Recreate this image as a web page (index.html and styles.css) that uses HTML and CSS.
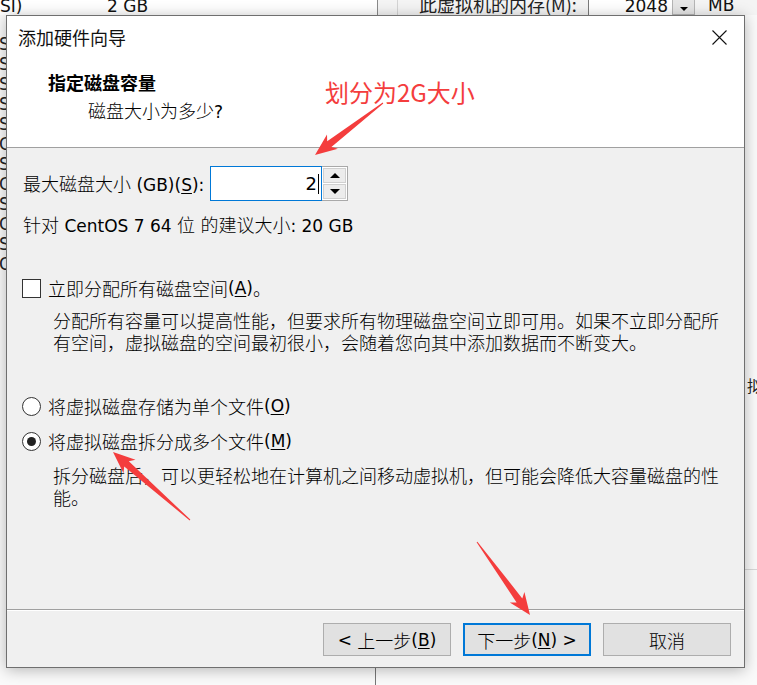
FILE: index.html
```html
<!DOCTYPE html>
<html lang="zh-CN">
<head>
<meta charset="utf-8">
<title>添加硬件向导</title>
<link rel="stylesheet" href="styles.css">
</head>
<body>
<div class="screen">
  <div class="backdrop">
    <div class="topstrip">
      <div class="ts-left"><span class="ts-a">SI)</span><span class="ts-b">2 GB</span></div>
      <div class="ts-right">
        <span class="ts-gap"></span>
        <span class="ts-label">此虚拟机的内存(M):</span>
        <span class="ts-input">2048</span>
        <span class="ts-spin"><i></i></span>
        <span class="ts-unit">MB</span>
      </div>
    </div>
    <div class="mid">
      <div class="mid-left">
        <span>S</span><span>S</span><span>S</span><span>S</span><span>S</span><span>C</span>
        <span>S</span><span>C</span><span>S</span><span>C</span><span>S</span><span>O</span>
      </div>
      <div class="mid-right">
        <span class="mr-text">拟</span>
        <span class="mr-line"></span>
      </div>
    </div>
    <div class="bot"><span class="bot-col"></span></div>
  </div>

  <div class="dialog">
    <div class="titlebar">
      <span class="title">添加硬件向导</span>
      <svg class="close" width="15" height="15" viewBox="0 0 15 15"><path d="M0.5 0.5 L14.5 14.5 M14.5 0.5 L0.5 14.5" stroke="#111" stroke-width="1.1" fill="none"/></svg>
    </div>
    <div class="header">
      <div class="h-title">指定磁盘容量</div>
      <div class="h-sub">磁盘大小为多少<span class="l">?</span></div>
    </div>
    <div class="content">
      <div class="size-row">
        <span class="label">最大磁盘大小<span class="l"> (GB)(<u>S</u>):</span></span>
        <div class="field"><span class="l">2</span><span class="caret"></span></div>
        <div class="spin">
          <div class="sb"><i class="up"></i></div>
          <div class="sb"><i class="down"></i></div>
        </div>
      </div>
      <div class="hint">针对<span class="l"> CentOS 7 64 </span>位<span class="l"> </span>的建议大小<span class="l">: 20 GB</span></div>
      <div class="opt check"><span class="box"></span>立即分配所有磁盘空间<span class="l">(<u>A</u>)</span>。</div>
      <p class="desc">分配所有容量可以提高性能，但要求所有物理磁盘空间立即可用。如果不立即分配所<br>有空间，虚拟磁盘的空间最初很小，会随着您向其中添加数据而不断变大。</p>
      <div class="opt radio r1"><span class="circle"></span>将虚拟磁盘存储为单个文件<span class="l">(<u>O</u>)</span></div>
      <div class="opt radio r2"><span class="circle on"></span>将虚拟磁盘拆分成多个文件<span class="l">(<u>M</u>)</span></div>
      <p class="desc d2">拆分磁盘后，可以更轻松地在计算机之间移动虚拟机，但可能会降低大容量磁盘的性<br>能。</p>
    </div>
    <div class="footer">
      <button class="btn"><span class="l">&lt; </span>上一步<span class="l">(<u>B</u>)</span></button>
      <button class="btn primary">下一步<span class="l">(<u>N</u>) &gt;</span></button>
      <button class="btn">取消</button>
    </div>
  </div>

  <div class="note">划分为2G大小</div>
  <svg class="marks" width="757" height="685" viewBox="0 0 757 685">
    <polygon points="383.3,103.4 331.4,146.9 337.9,148.8 315,155 327.0,134.5 327.2,141.3 382.7,102.6"/>
    <polygon points="190.3,519.6 128.8,461.3 135.5,459.8 113,452 123.5,473.3 124.2,466.6 189.7,520.4"/>
    <polygon points="477.4,541.7 522.3,598.4 524.4,591.9 530,615 509.8,602.5 516.6,602.5 476.6,542.3"/>
  </svg>
</div>
</body>
</html>
```
FILE: styles.css
```css
* { box-sizing: border-box; }
html, body { margin: 0; padding: 0; }
body {
  width: 757px;
  height: 685px;
  overflow: hidden;
  background: #fafafa;
  font-family: "Noto Sans CJK SC", sans-serif;
  color: #111;
}
.screen { position: relative; width: 757px; height: 685px; overflow: hidden; }

/* ---------- backdrop window ---------- */
.backdrop { display: flex; flex-direction: column; height: 685px; }
.topstrip { height: 15px; display: flex; overflow: hidden; font-size: 18px; line-height: 18px; }
.ts-left { width: 378px; display: flex; background: #fff; border-right: 1px solid #8a8a8a; font-family: "DejaVu Sans", sans-serif; font-size: 17px; }
.ts-a { width: 107px; margin-top: -3px; }
.ts-b { margin-top: -3px; }
.ts-right { flex: 1; display: flex; background: #f4f4f4; }
.ts-gap { width: 20px; border-right: 1px solid #d4d4d4; }
.ts-label { width: 190px; padding-left: 21px; margin-top: -5px; color: #222; }
.ts-input { width: 84px; background: #fff; border-left: 1px solid #7a7a7a; text-align: right; padding-right: 4px; font-family: "DejaVu Sans", sans-serif; font-size: 17px; line-height: 12px; }
.ts-spin { width: 23px; background: #e6e6e6; border: 1px solid #b5b5b5; border-top: none; display: flex; align-items: flex-end; justify-content: center; padding-bottom: 3px; }
.ts-spin i { width: 0; height: 0; border-left: 4px solid transparent; border-right: 4px solid transparent; border-top: 4px solid #000; }
.ts-unit { margin-left: 13px; font-family: "DejaVu Sans", sans-serif; font-size: 17px; margin-top: -4px; }

.mid { height: 653px; display: flex; }
.mid-left { width: 6px; overflow: hidden; display: flex; flex-direction: column; padding-top: 19px; font-family: "DejaVu Sans", sans-serif; font-size: 17px; line-height: 20px; color: #222; }
.mid-left span { margin-left: -1px; }
.mid-right { margin-left: auto; width: 12px; overflow: hidden; display: flex; flex-direction: column; padding-top: 360px; }
.mr-text { font-size: 16px; line-height: 20px; padding-left: 2px; color: #222; white-space: nowrap; }
.mr-line { margin-top: 174px; height: 1px; background: #d8d8d8; }
.bot { height: 17px; display: flex; }
.bot-col { width: 376px; border-right: 1px solid #777; }

/* ---------- dialog ---------- */
.dialog {
  position: absolute;
  left: 6px;
  top: 15px;
  width: 739px;
  height: 653px;
  border: 1px solid #6f6f6f;
  background: #f0f0f0;
  box-shadow: 0 2px 14px rgba(0, 0, 0, 0.28);
  display: flex;
  flex-direction: column;
}
.l { font-family: "DejaVu Sans", sans-serif; font-size: 17px; font-weight: 400; }
u { text-decoration: underline; text-underline-offset: 2px; }

.titlebar {
  height: 44px;
  background: #fff;
  display: flex;
  align-items: center;
  justify-content: space-between;
  padding: 0 17px 2px 11px;
}
.title { font-size: 18px; font-weight: 400; color: #111; }
.close { display: block; }

.header { height: 88px; background: #fff; padding: 11px 0 0 41px; border-bottom: 1px solid #a0a0a0; }
.h-title { font-size: 18px; line-height: 22px; font-weight: 700; color: #000; }
.h-sub { font-size: 18px; line-height: 22px; margin-top: 6px; padding-left: 40px; font-weight: 300; color: #000; }

.content { flex: 1; padding: 0 16px; font-size: 18px; font-weight: 300; color: #000; }
.size-row { margin-top: 18px; height: 35px; display: flex; align-items: center; }
.label { width: 187px; line-height: 22px; white-space: nowrap; }
.field {
  width: 112px;
  height: 35px;
  border: 1px solid #0078d7;
  background: #fff;
  display: flex;
  align-items: center;
  justify-content: flex-end;
  padding-right: 2px;
}
.field .l { font-size: 18px; }
.caret { width: 1px; height: 20px; background: #000; margin-left: 1px; }
.spin { width: 26px; height: 35px; border: 1px solid #a9a9a9; border-left: none; display: flex; flex-direction: column; padding: 1px; gap: 1px; background: #fff; }
.sb { flex: 1; background: #ececec; border: 1px solid #d0d0d0; display: flex; align-items: center; justify-content: center; }
.sb i { width: 0; height: 0; border-left: 5px solid transparent; border-right: 5px solid transparent; }
.sb i.up { border-bottom: 5px solid #000; }
.sb i.down { border-top: 5px solid #000; }

.hint { margin-top: 12px; line-height: 22px; white-space: nowrap; }
.opt { display: flex; align-items: center; height: 22px; white-space: nowrap; }
.check { margin-top: 40px; }
.box { width: 19px; height: 19px; border: 1px solid #333; background: #fff; margin: 0 7px 0 -1px; flex: none; }
.desc { margin: 10px 0 0 30px; line-height: 22px; white-space: nowrap; }
.r1 { margin-top: 42px; }
.r2 { margin-top: 13px; }
.d2 { margin-top: 12px; }
.circle {
  width: 19px;
  height: 19px;
  border-radius: 50%;
  border: 1px solid #333;
  background: #fff;
  margin: 0 7px 0 -1px;
  flex: none;
  display: flex;
  align-items: center;
  justify-content: center;
}
.circle.on::after { content: ""; width: 9px; height: 9px; border-radius: 50%; background: #222; }

.footer {
  height: 58px;
  border-top: 1px solid #a0a0a0;
  box-shadow: inset 0 1px 0 #fff;
  display: flex;
  justify-content: flex-end;
  align-items: flex-start;
  gap: 12px;
  padding: 13px 13px 0 0;
}
.btn {
  width: 128px;
  height: 33px;
  border: 1px solid #adadad;
  background: #e1e1e1;
  font-family: "Noto Sans CJK SC", sans-serif;
  font-size: 18px;
  font-weight: 300;
  color: #000;
  padding: 0;
  display: flex;
  align-items: center;
  justify-content: center;
  white-space: pre;
}
.btn.primary { border: 2px solid #0078d7; }

/* ---------- annotations ---------- */
.note {
  position: absolute;
  left: 325px;
  top: 78px;
  font-size: 24px;
  line-height: 28px;
  color: #f43d3d;
  white-space: nowrap;
}
.marks { position: absolute; left: 0; top: 0; pointer-events: none; }
.marks polygon { fill: #f43d3d; }
```
